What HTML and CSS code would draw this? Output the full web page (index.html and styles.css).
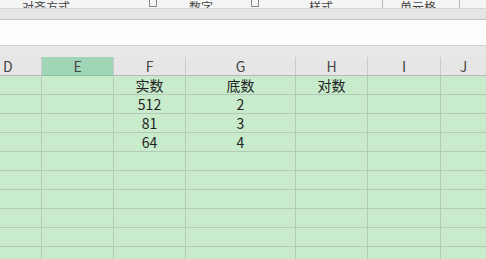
FILE: index.html
```html
<!DOCTYPE html>
<html lang="zh">
<head>
<meta charset="utf-8">
<link rel="stylesheet" href="styles.css">
</head>
<body>
<div class="ribbon">
  <span class="rb-label l1">对齐方式</span>
  <span class="launch l2"></span>
  <span class="rb-label l3">数字</span>
  <span class="launch l4"></span>
  <span class="rb-label l5">样式</span>
  <span class="sep l6"></span>
  <span class="rb-label l7">单元格</span>
  <span class="sep l8"></span>
</div>
<div class="bar"></div>
<div class="formula"></div>
<div class="band"></div>
<div class="sheet">
  <div class="hd">D</div><div class="hd sel">E</div><div class="hd">F</div><div class="hd">G</div><div class="hd">H</div><div class="hd">I</div><div class="hd last">J</div>

  <div class="c"></div><div class="c"></div><div class="c">实数</div><div class="c">底数</div><div class="c">对数</div><div class="c"></div><div class="c last"></div>
  <div class="c"></div><div class="c"></div><div class="c">512</div><div class="c">2</div><div class="c"></div><div class="c"></div><div class="c last"></div>
  <div class="c"></div><div class="c"></div><div class="c">81</div><div class="c">3</div><div class="c"></div><div class="c"></div><div class="c last"></div>
  <div class="c"></div><div class="c"></div><div class="c">64</div><div class="c">4</div><div class="c"></div><div class="c"></div><div class="c last"></div>
  <div class="c"></div><div class="c"></div><div class="c"></div><div class="c"></div><div class="c"></div><div class="c"></div><div class="c last"></div>
  <div class="c"></div><div class="c"></div><div class="c"></div><div class="c"></div><div class="c"></div><div class="c"></div><div class="c last"></div>
  <div class="c"></div><div class="c"></div><div class="c"></div><div class="c"></div><div class="c"></div><div class="c"></div><div class="c last"></div>
  <div class="c"></div><div class="c"></div><div class="c"></div><div class="c"></div><div class="c"></div><div class="c"></div><div class="c last"></div>
  <div class="c"></div><div class="c"></div><div class="c"></div><div class="c"></div><div class="c"></div><div class="c"></div><div class="c last"></div>
  <div class="c"></div><div class="c"></div><div class="c"></div><div class="c"></div><div class="c"></div><div class="c"></div><div class="c last"></div>
</div>
</body>
</html>
```
FILE: styles.css
```css
* { box-sizing: border-box; }
html, body { margin: 0; padding: 0; }
body {
  width: 486px;
  height: 259px;
  overflow: hidden;
  background: #c8ebcc;
  font-family: "Noto Sans CJK SC", "Liberation Sans", sans-serif;
}
.ribbon {
  height: 8px;
  background: #f5f5f5;
  overflow: hidden;
  display: flex;
  align-items: flex-end;
}
.rb-label {
  font-size: 12px;
  line-height: 14px;
  color: #444;
  margin-bottom: -6px;
  flex: none;
}
.l1 { margin-left: 22px; }
.launch {
  flex: none;
  width: 8px;
  height: 12px;
  border: 1px solid #888;
  border-top: none;
  margin-bottom: 1px;
  margin-left: 79px;
}
.l3 { margin-left: 32px; }
.l4 { margin-left: 38px; }
.l5 { margin-left: 50px; }
.sep {
  flex: none;
  width: 1px;
  height: 8px;
  background: #b8b8b8;
}
.l6 { margin-left: 49px; }
.l7 { margin-left: 17px; }
.l8 { margin-left: 23px; }
.bar {
  height: 12px;
  background: #e5e5e5;
  border-top: 1px solid #d4d4d4;
  border-bottom: 1px solid #c4c4c4;
}
.formula {
  height: 26px;
  background: #fdfdfd;
  border-bottom: 1px solid #cfcfcf;
}
.band {
  height: 11px;
  background: #e8e8e8;
}
.sheet {
  display: grid;
  grid-template-columns: 42px 72px 72px 110px 72px 73px 1fr;
  grid-template-rows: 19px;
  grid-auto-rows: 19px;
}
.hd {
  background: #e6e6e6;
  color: #444;
  font-size: 14px;
  line-height: 18px;
  text-align: center;
  border-right: 1px solid #c9c9c9;
  border-bottom: 1px solid #b9b9b9;
}
.hd:first-child { text-align: left; padding-left: 3px; }
.hd.sel {
  background: #a0d5b5;
  border-bottom-color: #8cc4a3;
}
.c {
  background: #c8ebcc;
  color: #222;
  font-size: 14px;
  line-height: 18px;
  text-align: center;
  border-right: 1px solid #b5c9b8;
  border-bottom: 1px solid #b5c9b8;
}
.last { border-right: none; }
```
